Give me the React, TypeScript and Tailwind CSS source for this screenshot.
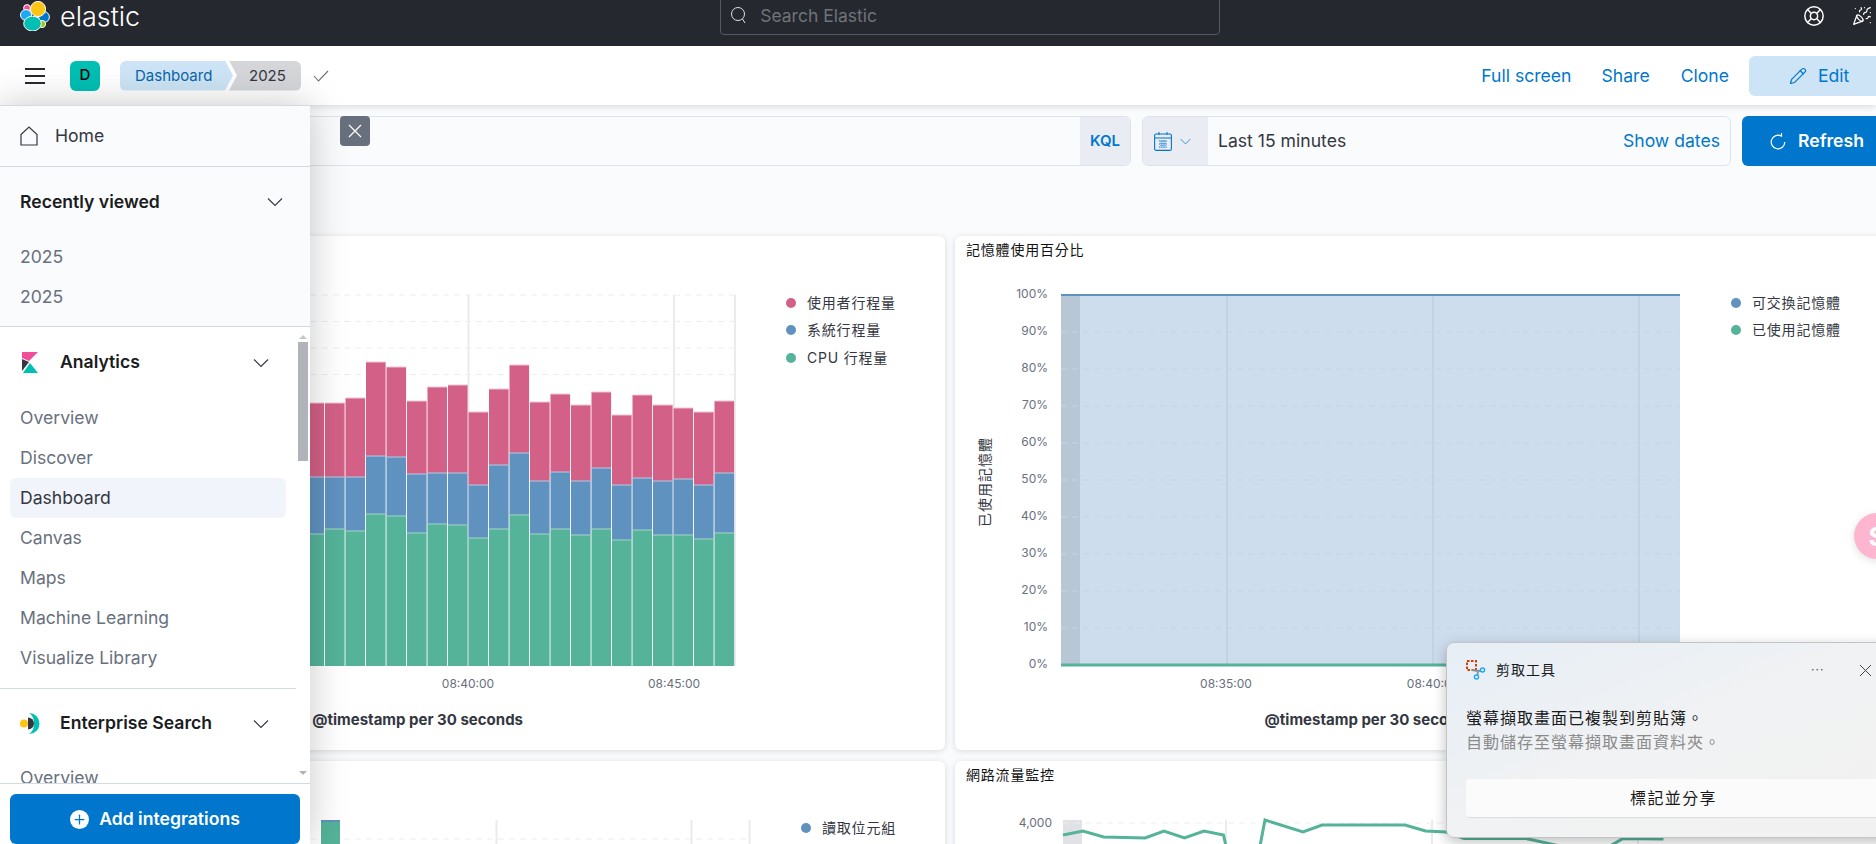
import { LifeBuoy, PartyPopper, Pencil, Plus } from "lucide-react";

const PINK = "#d36086";
const BLUE = "#6092c0";
const GREEN = "#54b399";

// tops of each stack segment, read as page y coordinates
const bars: [number, number, number][] = [
  [403, 477, 534],
  [403, 477, 529],
  [398, 477, 531],
  [362, 456, 514],
  [367, 457, 516],
  [401, 474, 533],
  [387, 473, 524],
  [385, 473, 525],
  [412, 485, 538],
  [389, 465, 529],
  [365, 453, 515],
  [402, 481, 534],
  [394, 472, 529],
  [405, 481, 535],
  [392, 468, 529],
  [415, 485, 540],
  [395, 478, 530],
  [405, 481, 535],
  [408, 479, 535],
  [412, 485, 539],
  [401, 473, 533],
];

const pct = ["100%", "90%", "80%", "70%", "60%", "50%", "40%", "30%", "20%", "10%", "0%"];
const netLine =
  "1063,835 1083,831 1103.6,837 1145,838 1164,831 1184.5,838 1204,831 1223.5,835 1226,846 1260,846 1265,820 1303,832 1322,825 1405,825 1425.5,831 1446,832 1464,838.5 1526,838.5 1560,846 1610,846 1623,838.5 1663.5,839";

function Chevron({ className = "", color = "#343741" }: { className?: string; color?: string }) {
  return (
    <svg width="16" height="10" viewBox="0 0 16 10" fill="none" stroke={color} strokeWidth="1.1" className={className}>
      <path d="M1 1.5l7 7 7-7" />
    </svg>
  );
}

function ElasticLogo() {
  return (
    <svg width="30" height="30" viewBox="20 1 30 30">
      <g stroke="#fff" strokeWidth="1">
        <circle cx="27" cy="8" r="3.4" fill="#f04e98" />
        <ellipse cx="26" cy="15" rx="5.5" ry="5.4" fill="#1ba9f5" />
        <circle cx="44" cy="17" r="5.4" fill="#0077cc" />
        <circle cx="42" cy="24" r="3.6" fill="#93c90e" />
        <circle cx="38" cy="9" r="7.6" fill="#fec514" />
        <ellipse cx="32.5" cy="23.6" rx="8.8" ry="7.4" fill="#00bfb3" />
      </g>
    </svg>
  );
}

function Legend({ items }: { items: [string, string][] }) {
  return (
    <div className="flex flex-col pl-2 pt-[23px]">
      {items.map(([label, color]) => (
        <div key={label} className="flex h-[27.5px] items-center gap-[11px] whitespace-nowrap text-sm tracking-[0.8px] text-[#343741]">
          <span className="h-2.5 w-2.5 rounded-full" style={{ backgroundColor: color }} />
          {label}
        </div>
      ))}
    </div>
  );
}

function CpuChart() {
  return (
    <svg width="770" height="484" viewBox="8 266 770 484" className="flex-none">
      {[295, 321.5, 348, 374.5].map((y) => (
        <line key={y} x1="300" x2="735" y1={y} y2={y} stroke="#eceef2" strokeDasharray="6 5" />
      ))}
      {[468.5, 674, 735].map((x) => (
        <line key={x} x1={x} x2={x} y1="295" y2="666" stroke="#e9ebf1" strokeWidth="2" />
      ))}
      {bars.map(([p, b, g], i) => {
        const x = 304.5 + i * 20.5;
        return (
          <g key={i}>
            <rect x={x} y={p} width="19.6" height={b - p} fill={PINK} />
            <rect x={x} y={b} width="19.6" height={g - b} fill={BLUE} />
            <rect x={x} y={g} width="19.6" height={666 - g} fill={GREEN} />
            <line x1={x} x2={x + 19.6} y1={p} y2={p} stroke="#f0c3d2" />
            <line x1={x} x2={x + 19.6} y1={b} y2={b} stroke="#b5cbe2" />
            <line x1={x} x2={x + 19.6} y1={g} y2={g} stroke="#a5d6c8" />
          </g>
        );
      })}
      <text x="468" y="688" textAnchor="middle" fontSize="12" fill="#69707d">08:40:00</text>
      <text x="674" y="688" textAnchor="middle" fontSize="12" fill="#69707d">08:45:00</text>
      <text x="523" y="725" textAnchor="end" fontSize="15" fontWeight="700" fill="#343741">@timestamp per 30 seconds</text>
    </svg>
  );
}

function MemoryChart() {
  return (
    <svg width="768" height="484" viewBox="955 266 768 484" className="flex-none">
      <rect x="1061" y="295" width="619" height="370" fill="#cedded" />
      <rect x="1061" y="295" width="19" height="370" fill="#b8c7d5" />
      {[1227, 1433, 1639].map((x) => (
        <line key={x} x1={x} x2={x} y1="295" y2="665" stroke="#c3d3e4" strokeWidth="2" />
      ))}
      {pct.map((p, i) => {
        const y = 295 + i * 37;
        return (
          <g key={p}>
            <text x="1048" y={y + 3} textAnchor="end" fontSize="12" fill="#69707d">{p}</text>
            {i > 0 && i < 10 && <line x1="1061" x2="1680" y1={y} y2={y} stroke="#c6d5e5" strokeDasharray="6 5" />}
          </g>
        );
      })}
      <line x1="1061" x2="1680" y1="295" y2="295" stroke={BLUE} strokeWidth="2" />
      <line x1="1061" x2="1680" y1="665" y2="665" stroke={GREEN} strokeWidth="3" />
      <text x="1226" y="688" textAnchor="middle" fontSize="12" fill="#69707d">08:35:00</text>
      <text x="1433" y="688" textAnchor="middle" fontSize="12" fill="#69707d">08:40:00</text>
      <text x="1370" y="725" textAnchor="middle" fontSize="15" fontWeight="700" fill="#343741">@timestamp per 30 seconds</text>
      <text x="0" y="0" transform="translate(990 482) rotate(-90)" textAnchor="middle" fontSize="14" letterSpacing="1" fill="#343741">已使用記憶體</text>
    </svg>
  );
}

function DiskChart() {
  return (
    <svg width="785" height="60" viewBox="8 791 785 60" className="flex-none">
      {[496.5, 691.5, 749.5].map((x) => (
        <line key={x} x1={x} x2={x} y1="820" y2="851" stroke="#e9ebf1" strokeWidth="2" />
      ))}
      <line x1="300" x2="750" y1="839" y2="839" stroke="#eceef2" strokeDasharray="6 5" />
      <rect x="321" y="820" width="19" height="31" fill={GREEN} />
      <rect x="321" y="820" width="19" height="2" fill={BLUE} />
    </svg>
  );
}

function NetChart() {
  return (
    <svg width="768" height="60" viewBox="955 791 768 60" className="flex-none">
      <rect x="1063" y="820" width="19" height="31" fill="#e0e2e6" />
      {[1226, 1432, 1638].map((x) => (
        <line key={x} x1={x} x2={x} y1="820" y2="851" stroke="#e9ebf1" strokeWidth="2" />
      ))}
      <line x1="1063" x2="1680" y1="823" y2="823" stroke="#eceef2" strokeDasharray="6 5" />
      <text x="1052" y="827" textAnchor="end" fontSize="12" fill="#69707d">4,000</text>
      <polyline points={netLine} fill="none" stroke={GREEN} strokeWidth="3" />
    </svg>
  );
}

function NavGroup({ children }: { children: string[] }) {
  return (
    <ul>
      {children.map((item) => (
        <li
          key={item}
          className={`ml-2.5 flex h-10 w-[276px] items-center rounded-md px-2.5 ${
            item === "Dashboard" ? "bg-[#f1f4fa] text-[#343741]" : "text-[#69707d]"
          }`}
        >
          {item}
        </li>
      ))}
    </ul>
  );
}

function Sidebar() {
  return (
    <aside className="absolute bottom-0 left-0 top-[105px] z-20 flex w-[310px] flex-col border-t border-[#d3dae6] bg-white text-[17.6px] shadow-[0_0_36px_rgba(0,0,0,0.22)]">
      <div className="flex h-[61px] flex-none items-center gap-[17px] border-b border-[#d3dae6] bg-[#fafbfd] px-5 text-[#343741]">
        <svg width="18" height="20" viewBox="0 0 18 20" fill="none" stroke="#343741" strokeWidth="1.2">
          <path d="M1 19V8.5L9 1l8 7.5V19z" />
        </svg>
        Home
      </div>
      <div className="h-[160px] flex-none border-b border-[#d3dae6] bg-[#fafbfd]">
        <div className="flex h-[70px] items-center justify-between pl-5 pr-[27px] font-semibold text-[#1a1c21]">
          Recently viewed
          <Chevron />
        </div>
        <div className="flex h-10 items-center px-5 text-[#69707d]">2025</div>
        <div className="flex h-10 items-center px-5 text-[#69707d]">2025</div>
      </div>
      <div className="relative min-h-0 flex-1 overflow-hidden">
        <div className="flex h-[71px] items-center pl-[22px] pr-[41px]">
          <svg width="16" height="21" viewBox="0 0 16 21" className="flex-none">
            <polygon points="0,0 16,0 7,9 0,6" fill="#f04e98" />
            <polygon points="0,7 7,10 0,19" fill="#343741" />
            <polygon points="1,21 16,21 8,11" fill="#00bfb3" />
          </svg>
          <span className="ml-[22px] flex-1 font-semibold text-[#1a1c21]">Analytics</span>
          <Chevron />
        </div>
        <NavGroup>{["Overview", "Discover", "Dashboard", "Canvas", "Maps", "Machine Learning", "Visualize Library"]}</NavGroup>
        <div className="mt-[10px] w-[296px] border-t border-[#d3dae6]" />
        <div className="flex h-[69px] items-center pl-5 pr-[41px]">
          <svg width="20" height="21" viewBox="0 0 20 21" className="flex-none">
            <path d="M9 0a10.5 10.5 0 1 1 0 21c3-2 5-5 5-10.500S12 2 9 0z" fill="#00bfb3" />
            <path d="M8 4.500a6 6 0 0 1 0 12z" fill="#343741" />
            <circle cx="4" cy="10.500" r="4" fill="#fec514" />
          </svg>
          <span className="ml-5 flex-1 font-semibold text-[#1a1c21]">Enterprise Search</span>
          <Chevron />
        </div>
        <NavGroup>{["Overview"]}</NavGroup>
        <div className="absolute right-0.5 top-0 flex h-full w-2.5 flex-col items-center">
          <span className="mt-2 border-x-[4px] border-b-[4px] border-x-transparent border-b-[#c4c7cc]" />
          <span className="mt-[3px] h-[119px] w-2.5 bg-[#b0b3ba]" />
          <span className="mt-auto mb-2 border-x-[4px] border-t-[4px] border-x-transparent border-t-[#b0b3ba]" />
        </div>
      </div>
      <div className="h-[61px] flex-none border-t border-[#d3dae6] px-2.5 pt-2.5">
        <button className="flex h-[50px] w-full items-center justify-center gap-2.5 rounded-md bg-[#0077cc] font-semibold text-white">
          <span className="flex h-[19px] w-[19px] items-center justify-center rounded-full bg-white">
            <Plus size={15} color="#0077cc" strokeWidth={2} />
          </span>
          Add integrations
        </button>
      </div>
    </aside>
  );
}

function SnipToast() {
  return (
    <div className="absolute left-[1446px] top-[642px] z-30 h-[196px] w-[460px] rounded-lg border border-[#c2c4c6] bg-gradient-to-br from-[#e6eef6] via-[#f1f2f3] to-[#f1f1f1] shadow-[0_4px_14px_rgba(0,0,0,0.25)]">
      <div className="flex h-[54px] items-center pl-[19px] text-sm tracking-[1px] text-[#1a1a1a]">
        <svg width="20" height="20" viewBox="0 0 20 20" fill="none">
          <rect x="1" y="1" width="9" height="9" stroke="#d83b01" strokeWidth="2" strokeDasharray="2.500 1.500" />
          <path d="M6 10l6 1 5-.5M12 11l-.5 4" stroke="#8a8f94" strokeWidth="1.800" />
          <circle cx="16.500" cy="10" r="2" stroke="#1ba9f5" strokeWidth="1.500" fill="#fff" />
          <circle cx="10.500" cy="17" r="2" stroke="#1ba9f5" strokeWidth="1.500" fill="#fff" />
        </svg>
        <span className="ml-2.5">剪取工具</span>
        <span className="ml-[255px] text-xs tracking-[1px] text-[#555]">···</span>
        <svg width="13" height="13" viewBox="0 0 13 13" stroke="#444" className="ml-[35px]">
          <path d="M1 1l11 11M12 1L1 12" />
        </svg>
      </div>
      <div className="pl-[19px] pt-[9px] text-base leading-6 tracking-[1px]">
        <p className="text-[#1a1a1a]">螢幕擷取畫面已複製到剪貼簿。</p>
        <p className="text-[#8a8a8a]">自動儲存至螢幕擷取畫面資料夾。</p>
      </div>
      <button className="ml-[19px] mt-[25px] h-[39px] w-[415px] rounded border-b border-[#dcdcdc] bg-[#fbfbfb] text-base tracking-[1.400px] text-[#1a1a1a]">
        標記並分享
      </button>
    </div>
  );
}

export default function App() {
  return (
    <div className="relative h-[844px] w-[1876px] overflow-hidden bg-[#fafbfd] font-['Inter','Noto_Sans_CJK_TC',sans-serif]">
      <header className="flex h-[46px] items-start bg-[#25282f]">
        <div className="ml-5 mt-px">
          <ElasticLogo />
        </div>
        <span className="ml-[10px] mt-[-1px] text-[27px] font-light leading-[36px] text-white">elastic</span>
        <div className="ml-[580px] -mt-[5px] flex h-10 w-[500px] items-center rounded border border-[#555960] pl-2.5 pt-0.5 text-[17.5px] text-[#6f737a]">
          <svg width="16" height="18" viewBox="0 0 16 18" fill="none" stroke="#e0e1e3" strokeWidth="1">
            <circle cx="7" cy="7" r="6.500" />
            <path d="M11.500 12l2.500 4" />
          </svg>
          <span className="ml-[13px]">Search Elastic</span>
        </div>
        <div className="ml-auto mr-[4px] mt-[5px] flex items-center gap-[27px] text-white">
          <LifeBuoy size={22} strokeWidth={1.6} />
          <PartyPopper size={20} strokeWidth={1.5} />
        </div>
      </header>

      <nav className="relative z-10 flex h-[59px] items-center bg-white pr-0 shadow-[0_2px_6px_rgba(0,0,0,0.12)]">
        <div className="ml-[25px] flex w-5 flex-col gap-[5px]">
          <span className="h-0.5 bg-[#25282f]" />
          <span className="h-0.5 bg-[#25282f]" />
          <span className="h-0.5 bg-[#25282f]" />
        </div>
        <div className="ml-[25px] flex h-[30px] w-[30px] items-center justify-center rounded-md bg-[#00bfb3] text-[15px] font-medium text-black">D</div>
        <div className="ml-5 flex overflow-hidden rounded-md text-[15px]">
          <div className="flex h-[30px] w-[113px] items-center bg-[#cce4f5] pl-[15px] pt-px text-[#0b64a8] [clip-path:polygon(0_0,calc(100%-8px)_0,100%_50%,calc(100%-8px)_100%,0_100%)]">Dashboard</div>
          <div className="-ml-1 flex h-[30px] w-[72px] items-center bg-[#d4d6da] pl-5 pt-px text-[#343741] [clip-path:polygon(0_0,100%_0,100%_100%,0_100%,8px_50%)]">2025</div>
        </div>
        <svg width="16" height="12" viewBox="0 0 16 12" fill="none" stroke="#69707d" strokeWidth="1.1" className="ml-3">
          <path d="M1 6l4.500 5L15 1" />
        </svg>
        <div className="ml-auto flex items-center text-[17.6px] text-[#0077cc]">
          <span className="pt-0.5">Full screen</span>
          <span className="ml-[30px] pt-0.5">Share</span>
          <span className="ml-[31px] pt-0.5">Clone</span>
          <div className="ml-5 flex h-10 w-[127px] flex-none items-center rounded-l-md bg-[#cce4f5] pl-10">
            <Pencil size={18} strokeWidth={1.6} />
            <span className="ml-[11px] pt-0.5">Edit</span>
          </div>
        </div>
      </nav>

      <div className="ml-2 mt-[11px] flex h-[50px] gap-[11px]">
        <div className="flex w-[1123px] flex-none overflow-hidden rounded-md border border-[#dde2ec]">
          <div className="flex-1" />
          <div className="flex w-[50px] items-center justify-center bg-[#e9edf3] text-[15px] font-semibold text-[#0077cc]">KQL</div>
        </div>
        <div className="flex w-[589px] flex-none overflow-hidden rounded-md border border-[#dde2ec]">
          <div className="flex w-[65px] items-center gap-2 bg-[#e9edf3] pl-[11px]">
            <svg width="18" height="20" viewBox="0 0 18 20" fill="none" stroke="#0077cc" strokeWidth="1.1">
              <rect x="0.600" y="3" width="16.800" height="16.400" rx="1.500" />
              <path d="M1 7h16M5 1v3M13 1v3" />
              <path d="M5 10h8M5 13h8M5 16h8M7 9.500v7M9 9.500v7M11 9.500v7" strokeWidth="1" strokeDasharray="1.200 1" />
            </svg>
            <Chevron className="h-[7px] w-[11px]" color="#0077cc" />
          </div>
          <span className="ml-2.5 flex items-center text-[17.6px] text-[#343741]">Last 15 minutes</span>
          <span className="ml-auto mr-[10px] flex items-center text-[17.6px] text-[#0077cc]">Show dates</span>
        </div>
        <div className="flex w-[140px] flex-none items-center rounded-l-md bg-[#0077cc] pl-7 text-[17.6px] font-semibold text-white">
          <svg width="16" height="18" viewBox="0 0 16 18" fill="none" stroke="#fff" strokeWidth="1.2">
            <path d="M11.500 4.200a6.800 6.800 0 1 0 3.300 5.800M11.500 1v3.800" />
          </svg>
          <span className="ml-3">Refresh</span>
        </div>
      </div>

      <div className="ml-2 mt-[70px] grid grid-cols-[937px_929px] grid-rows-[514px_200px] gap-x-2.5 gap-y-[11px]">
        <section className="rounded-md bg-white shadow-[0_1px_6px_rgba(0,0,0,0.14)]">
          <div className="h-[30px]" />
          <div className="flex">
            <CpuChart />
            <Legend items={[["使用者行程量", PINK], ["系統行程量", BLUE], ["CPU 行程量", GREEN]]} />
          </div>
        </section>
        <section className="rounded-md bg-white shadow-[0_1px_6px_rgba(0,0,0,0.14)]">
          <h3 className="flex h-[30px] items-center pb-[3px] pl-[11px] text-sm font-normal tracking-[0.8px] text-[#111]">記憶體使用百分比</h3>
          <div className="flex">
            <MemoryChart />
            <Legend items={[["可交換記憶體", BLUE], ["已使用記憶體", GREEN]]} />
          </div>
        </section>
        <section className="rounded-md bg-white shadow-[0_1px_6px_rgba(0,0,0,0.14)]">
          <div className="h-[30px]" />
          <div className="flex">
            <DiskChart />
            <Legend items={[["讀取位元組", BLUE]]} />
          </div>
        </section>
        <section className="rounded-md bg-white shadow-[0_1px_6px_rgba(0,0,0,0.14)]">
          <h3 className="flex h-[30px] items-center pb-[2px] pl-[11px] text-sm font-normal tracking-[0.8px] text-[#111]">網路流量監控</h3>
          <NetChart />
        </section>
      </div>

      <div className="absolute left-[340px] top-[116px] flex h-[30px] w-[30px] items-center justify-center rounded bg-[#69707d]">
        <svg width="14" height="14" viewBox="0 0 14 14" stroke="#fff" strokeWidth="1.2">
          <path d="M1 1l12 12M13 1L1 13" />
        </svg>
      </div>
      <div className="absolute left-[1854px] top-[513px] flex h-[46px] w-[46px] items-center justify-center rounded-full bg-[#fdb5d0] text-[26px] font-bold text-white shadow-[0_2px_8px_rgba(0,0,0,0.12)]">
        $
      </div>
      <Sidebar />
      <SnipToast />
    </div>
  );
}
